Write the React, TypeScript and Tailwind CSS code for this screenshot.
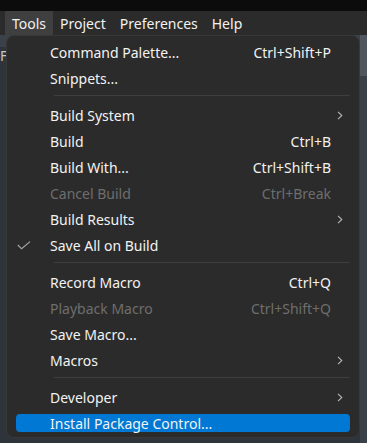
type Item =
  | { kind: 'sep' }
  | { kind: 'item'; label: string; shortcut?: string; submenu?: boolean; disabled?: boolean; checked?: boolean; active?: boolean };

const items: Item[] = [
  { kind: 'item', label: 'Command Palette...', shortcut: 'Ctrl+Shift+P' },
  { kind: 'item', label: 'Snippets...' },
  { kind: 'sep' },
  { kind: 'item', label: 'Build System', submenu: true },
  { kind: 'item', label: 'Build', shortcut: 'Ctrl+B' },
  { kind: 'item', label: 'Build With...', shortcut: 'Ctrl+Shift+B' },
  { kind: 'item', label: 'Cancel Build', shortcut: 'Ctrl+Break', disabled: true },
  { kind: 'item', label: 'Build Results', submenu: true },
  { kind: 'item', label: 'Save All on Build', checked: true },
  { kind: 'sep' },
  { kind: 'item', label: 'Record Macro', shortcut: 'Ctrl+Q' },
  { kind: 'item', label: 'Playback Macro', shortcut: 'Ctrl+Shift+Q', disabled: true },
  { kind: 'item', label: 'Save Macro...' },
  { kind: 'item', label: 'Macros', submenu: true },
  { kind: 'sep' },
  { kind: 'item', label: 'Developer', submenu: true },
  { kind: 'item', label: 'Install Package Control...', active: true },
];

const menuBar = ['Tools', 'Project', 'Preferences', 'Help'];

const Chevron = () => (
  <svg width="6" height="9" viewBox="0 0 6 9" fill="none" stroke="#b5b5b5" strokeWidth="1.1">
    <path d="M1 0.8 L4.8 4.5 L1 8.2" />
  </svg>
);

const Tick = () => (
  <svg width="14" height="9" viewBox="0 0 14 9" fill="none" stroke="#a6a6a6" strokeWidth="1.2">
    <path d="M0.8 4 L4.6 7.8 L13 0.6" />
  </svg>
);

export default function App() {
  return (
    <div
      className="w-[367px] h-[443px] bg-[#2f343b] overflow-hidden relative text-[14px] text-[#f2f2f2]"
      style={{ fontFamily: '"Noto Sans", "Open Sans", sans-serif' }}
    >
      {/* title strip */}
      <div className="h-[11px] bg-[#0c0c0c]" />

      {/* menu bar */}
      <div className="h-[24px] bg-[#2b2b2b] flex pl-[5px]">
        {menuBar.map((m, i) => (
          <div
            key={m}
            className={`h-full flex items-center px-[7px] ${i === 0 ? 'bg-[#3f3f3f]' : ''}`}
          >
            {m}
          </div>
        ))}
      </div>

      {/* editor behind the menu */}
      <div className="flex h-[408px]">
        <div className="flex-1 flex flex-col">
          <div className="h-[12px] bg-[#3b4149]" />
          <div className="pt-[2px] text-[#c8c8c8] leading-[14px]">F</div>
        </div>
        <div className="w-[7px] flex flex-col">
          <div className="h-[41px] bg-[#4f565e]" />
          <div className="flex-1 bg-[#3b4149]" />
        </div>
      </div>

      {/* dropdown */}
      <div className="absolute left-[6px] top-[35px] w-[354px] h-[403px] bg-[#2b2b2b] border border-[#383838] rounded-[8px] pt-[3px]">
        {items.map((it, i) =>
          it.kind === 'sep' ? (
            <div key={i} className="h-[11px] pt-[4px] pl-[47px] pr-[9px]">
              <div className="h-px bg-[#3e3e3e]" />
            </div>
          ) : (
            <div key={i} className="h-[26px] px-[9px] py-[4px]">
              <div
                className={`h-[18px] rounded-[4px] flex items-center ${
                  it.active ? 'bg-[#0078d4]' : ''
                } ${it.disabled ? 'text-[#6e6e6e]' : ''}`}
              >
                <div className="w-[34px] pl-[1px] flex items-center">
                  {it.checked && <Tick />}
                </div>
                <div className="flex-1 whitespace-nowrap">{it.label}</div>
                {it.shortcut && <div className="whitespace-nowrap">{it.shortcut}</div>}
                <div className="w-[19px] pl-[6px] flex items-center">
                  {it.submenu && <Chevron />}
                </div>
              </div>
            </div>
          )
        )}
      </div>
    </div>
  );
}
